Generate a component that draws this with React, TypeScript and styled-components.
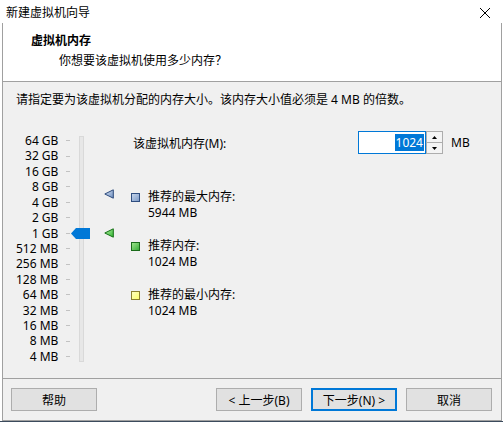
import React from 'react';
import styled, { createGlobalStyle } from 'styled-components';

const GlobalStyle = createGlobalStyle`
  html, body {
    margin: 0;
    padding: 0;
  }
  body {
    width: 503px;
    height: 422px;
    overflow: hidden;
    background: #3b4b5d;
    font-family: "Noto Sans", "Noto Sans CJK SC", sans-serif;
    font-size: 12px;
    color: #000;
  }
`;

const ROW = 15.43;
const PAD = 2;
const LEVELS = [
  '64 GB', '32 GB', '16 GB', '8 GB', '4 GB', '2 GB', '1 GB',
  '512 MB', '256 MB', '128 MB', '64 MB', '32 MB', '16 MB', '8 MB', '4 MB',
];

// centre (px from the top of the scale) for a memory size in MB
const pos = (mb: number) => PAD + Math.log2(65536 / mb) * ROW + ROW / 2;

const Window = styled.div`
  width: 503px;
  height: 421px;
  display: flex;
  flex-direction: column;
  background: #fff;
`;

const TitleBar = styled.div`
  height: 23px;
  display: flex;
  justify-content: space-between;
  align-items: flex-start;
  padding: 5px 13px 0 6px;
  box-sizing: border-box;
  line-height: 16px;
`;

const CloseIcon = styled.svg`
  margin-top: 3px;
`;

const Frame = styled.div`
  margin-left: 2px;
  width: 500px;
  height: 398px;
  box-sizing: border-box;
  border: 1px solid #a0a0a0;
  border-top: none;
  display: flex;
  flex-direction: column;
`;

const Header = styled.div`
  height: 59px;
  box-sizing: border-box;
  padding: 10px 0 0 28px;
  background: #fff;
  border-bottom: 1px solid #a0a0a0;
  line-height: 16px;
`;

const HeaderTitle = styled.div`
  font-weight: bold;
`;

const HeaderSub = styled.div`
  margin: 3px 0 0 28px;
  font-family: "Noto Sans CJK SC", sans-serif;
`;

const Body = styled.div`
  height: 297px;
  box-sizing: border-box;
  background: #f0f0f0;
  padding: 10px 0 0 13px;
  border-bottom: 1px solid #a0a0a0;
`;

const Intro = styled.div`
  line-height: 16px;
`;

const Main = styled.div`
  margin-top: 23px;
  display: flex;
  align-items: flex-start;
`;

const Scale = styled.div`
  display: flex;
  height: 236px;
`;

const Rows = styled.div<{ $width: number }>`
  width: ${(p) => p.$width}px;
  padding-top: ${PAD}px;
  display: grid;
  grid-auto-rows: ${ROW}px;
  align-content: start;
`;

const Label = styled.div`
  text-align: right;
  line-height: ${ROW}px;
  white-space: nowrap;
`;

const TickCell = styled.div`
  display: flex;
  align-items: center;
`;

const Tick = styled.div`
  width: 4px;
  height: 1px;
  background: #c2c2c2;
`;

const TrackWrap = styled.div`
  position: relative;
  margin-left: 9px;
  width: 5px;
`;

const Track = styled.div`
  margin-top: 5px;
  height: 226px;
  box-sizing: border-box;
  background: #e7e7e7;
  border: 1px solid #d9d9d9;
`;

const Thumb = styled.svg`
  position: absolute;
  left: -8px;
`;

const Markers = styled.div`
  position: relative;
  margin-left: 20px;
  width: 10px;
`;

const Marker = styled.svg`
  position: absolute;
  left: 0;
`;

const Side = styled.div`
  margin-left: 17px;
  display: flex;
  flex-direction: column;
`;

const FieldRow = styled.div`
  height: 23px;
  display: flex;
  align-items: center;
`;

const FieldLabel = styled.div`
  width: 225px;
  padding-left: 2px;
`;

const SpinInput = styled.div`
  width: 68px;
  height: 23px;
  box-sizing: border-box;
  border: 1px solid #0078d7;
  background: #fff;
  display: flex;
  justify-content: flex-end;
  align-items: center;
  padding-right: 1px;
`;

const Selected = styled.span`
  background: #0078d7;
  color: #fff;
  line-height: 17px;
  padding: 0 1px;
`;

const SpinButtons = styled.div`
  width: 17px;
  height: 23px;
  display: flex;
  flex-direction: column;
`;

const SpinButton = styled.div`
  flex: 1;
  box-sizing: border-box;
  border: 1px solid #adadad;
  background: #f4f4f4;
  display: flex;
  align-items: center;
  justify-content: center;
  & + & {
    border-top: none;
  }
`;

const Unit = styled.div`
  margin-left: 8px;
`;

const Legend = styled.div`
  margin-top: 35px;
  display: flex;
  flex-direction: column;
  gap: 17px;
`;

const LegendItem = styled.div`
  display: flex;
  align-items: flex-start;
`;

const LegendText = styled.div`
  display: flex;
  flex-direction: column;
`;

const LegendLine = styled.div`
  height: 16px;
  line-height: 16px;
  white-space: nowrap;
`;

const Swatch = styled.div<{ $fill: string; $edge: string }>`
  width: 9px;
  height: 9px;
  box-sizing: border-box;
  margin: 4px 8px 0 0;
  border: 1px solid ${(p) => p.$edge};
  background: ${(p) => p.$fill};
`;

const Footer = styled.div`
  flex: 1;
  background: #f0f0f0;
  display: flex;
  align-items: flex-start;
  padding: 9px 9px 0 8px;
  gap: 9px;
`;

const Button = styled.div<{ $default?: boolean }>`
  width: 86px;
  height: 23px;
  box-sizing: border-box;
  background: #e1e1e1;
  border: ${(p) => (p.$default ? '2px solid #0078d7' : '1px solid #adadad')};
  display: flex;
  align-items: center;
  justify-content: center;
`;

const Spacer = styled.div`
  flex: 1;
`;

const Triangle: React.FC<{ id: string; light: string; dark: string; edge: string; top: number }> = ({
  id, light, dark, edge, top,
}) => (
  <Marker width="10" height="10" viewBox="0 0 10 10" style={{ top }}>
    <defs>
      <linearGradient id={id} x1="0" y1="0" x2="1" y2="1">
        <stop offset="0" stopColor={light} />
        <stop offset="1" stopColor={dark} />
      </linearGradient>
    </defs>
    <polygon points="0.8,5 9.3,0.8 9.3,9.2" fill={`url(#${id})`} stroke={edge} strokeWidth="1" />
  </Marker>
);

const LEGEND = [
  { label: '推荐的最大内存:', value: '5944 MB', fill: 'linear-gradient(135deg, #c4d4ea, #7f9cc8)', edge: '#2f4e80' },
  { label: '推荐内存:', value: '1024 MB', fill: 'linear-gradient(135deg, #9be58b, #3cae3c)', edge: '#1a6b1a' },
  { label: '推荐的最小内存:', value: '1024 MB', fill: 'linear-gradient(135deg, #ffffc0, #ffff70)', edge: '#8c8030' },
];

export default function App() {
  return (
    <>
      <GlobalStyle />
      <Window>
        <TitleBar>
          <span>新建虚拟机向导</span>
          <CloseIcon width="10" height="10" viewBox="0 0 10 10">
            <path d="M0 0L10 10M10 0L0 10" stroke="#000" strokeWidth="1" />
          </CloseIcon>
        </TitleBar>
        <Frame>
          <Header>
            <HeaderTitle>虚拟机内存</HeaderTitle>
            <HeaderSub>你想要该虚拟机使用多少内存？</HeaderSub>
          </Header>
          <Body>
            <Intro>请指定要为该虚拟机分配的内存大小。该内存大小值必须是 4 MB 的倍数。</Intro>
            <Main>
              <Scale>
                <Rows $width={41}>
                  {LEVELS.map((l) => (
                    <Label key={l}>{l}</Label>
                  ))}
                </Rows>
                <Rows $width={4} style={{ marginLeft: 9 }}>
                  {LEVELS.map((l) => (
                    <TickCell key={l}>
                      <Tick />
                    </TickCell>
                  ))}
                </Rows>
                <TrackWrap>
                  <Track />
                  <Thumb width="19" height="11" viewBox="0 0 19 11" style={{ top: pos(1024) - 5.5 }}>
                    <polygon points="0,5.5 5,0 19,0 19,11 5,11" fill="#0078d7" />
                  </Thumb>
                </TrackWrap>
                <Markers>
                  <Triangle id="mx" light="#d6e2f3" dark="#6f8fc0" edge="#2c4a7c" top={pos(5944) - 5} />
                  <Triangle id="rc" light="#b8f0a8" dark="#2fb52f" edge="#157015" top={pos(1024) - 5} />
                </Markers>
              </Scale>
              <Side>
                <FieldRow>
                  <FieldLabel>该虚拟机内存(M):</FieldLabel>
                  <SpinInput>
                    <Selected>1024</Selected>
                  </SpinInput>
                  <SpinButtons>
                    <SpinButton>
                      <svg width="5" height="3" viewBox="0 0 5 3">
                        <polygon points="2.5,0 5,3 0,3" fill="#000" />
                      </svg>
                    </SpinButton>
                    <SpinButton>
                      <svg width="5" height="3" viewBox="0 0 5 3">
                        <polygon points="0,0 5,0 2.5,3" fill="#000" />
                      </svg>
                    </SpinButton>
                  </SpinButtons>
                  <Unit>MB</Unit>
                </FieldRow>
                <Legend>
                  {LEGEND.map((item) => (
                    <LegendItem key={item.label}>
                      <Swatch $fill={item.fill} $edge={item.edge} />
                      <LegendText>
                        <LegendLine>{item.label}</LegendLine>
                        <LegendLine>{item.value}</LegendLine>
                      </LegendText>
                    </LegendItem>
                  ))}
                </Legend>
              </Side>
            </Main>
          </Body>
          <Footer>
            <Button>帮助</Button>
            <Spacer />
            <Button>&lt; 上一步(B)</Button>
            <Button $default>下一步(N) &gt;</Button>
            <Button>取消</Button>
          </Footer>
        </Frame>
      </Window>
    </>
  );
}
